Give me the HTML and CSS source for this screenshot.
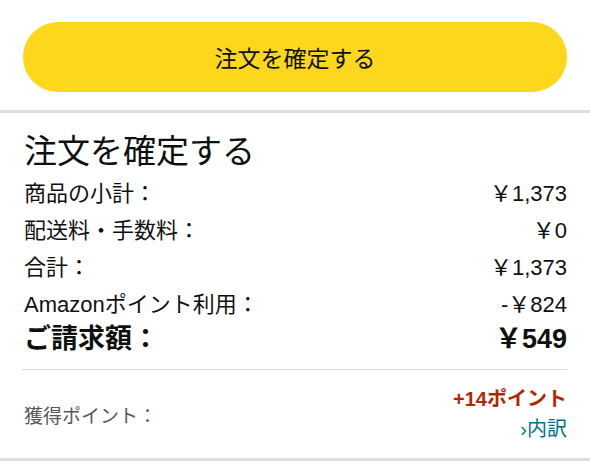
FILE: index.html
```html
<!DOCTYPE html>
<html lang="ja">
<head>
  <meta charset="UTF-8">
  <meta name="viewport" content="width=device-width, initial-scale=1.0">
  <title>注文を確定する</title>
  <link rel="stylesheet" href="styles.css">
</head>
<body>
  <div class="place-order">
    <button class="order-btn">注文を確定する</button>
  </div>

  <section class="summary">
    <h2 class="summary-title">注文を確定する</h2>
    <div class="row">
      <span>商品の小計：</span>
      <span>￥1,373</span>
    </div>
    <div class="row">
      <span>配送料・手数料：</span>
      <span>￥0</span>
    </div>
    <div class="row">
      <span>合計：</span>
      <span>￥1,373</span>
    </div>
    <div class="row">
      <span>Amazonポイント利用：</span>
      <span>-￥824</span>
    </div>
    <div class="row total">
      <span>ご請求額：</span>
      <span>￥549</span>
    </div>
  </section>

  <div class="points-wrap">
    <div class="points">
      <span class="points-label">獲得ポイント：</span>
      <div class="points-value">
        <span class="points-earned">+14ポイント</span>
        <a class="points-link" href="#">›内訳</a>
      </div>
    </div>
  </div>
</body>
</html>
```

FILE: styles.css
```css
body {
  margin: 0;
  background: #ffffff;
  color: #0f1111;
  font-family: "Liberation Sans", "Noto Sans CJK JP", sans-serif;
}

.place-order {
  padding: 22px 23px 18px;
  border-bottom: 3px solid #dddddd;
}

.order-btn {
  display: block;
  width: 100%;
  height: 70px;
  border: none;
  border-radius: 35px;
  background: #fdd71b;
  color: #0f1111;
  font-family: inherit;
  font-size: 23px;
  cursor: pointer;
}

.summary {
  padding: 16px 23px 13px 24px;
}

.summary-title {
  margin: 0;
  font-size: 33px;
  font-weight: normal;
  line-height: 46px;
}

.row {
  display: flex;
  justify-content: space-between;
  font-size: 22px;
  line-height: 37px;
}

.row.total {
  font-size: 27px;
  font-weight: bold;
  line-height: 33px;
}

.points-wrap {
  padding: 0 23px 0 22px;
  border-bottom: 3px solid #dddddd;
}

.points {
  display: flex;
  justify-content: space-between;
  align-items: center;
  padding: 14px 0 14px 2px;
  border-top: 1px solid #d5d9d9;
}

.points-label {
  color: #565959;
  font-size: 19px;
}

.points-value {
  display: flex;
  flex-direction: column;
  align-items: flex-end;
  line-height: 30px;
}

.points-earned {
  color: #b12704;
  font-size: 20px;
  font-weight: bold;
}

.points-link {
  color: #007185;
  font-size: 20px;
  text-decoration: none;
}
```
